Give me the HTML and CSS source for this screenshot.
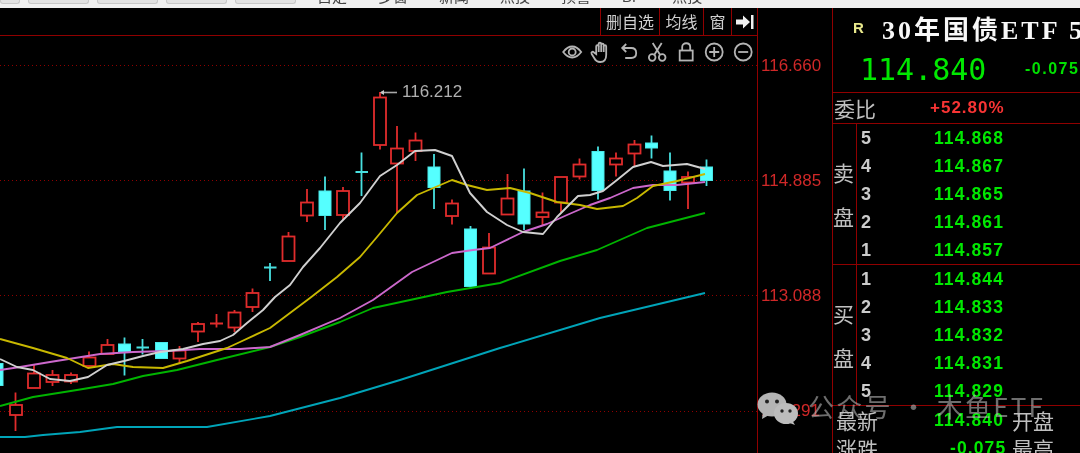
FILE: index.html
```html
<!DOCTYPE html>
<html lang="zh">
<head>
<meta charset="utf-8">
<title>30年国债ETF</title>
<link rel="stylesheet" href="styles.css">
</head>
<body>
<div class="page">
  <header class="menubar">
    <div class="tabs"><span class="tab first"></span><span class="tab"></span><span class="tab"></span><span class="tab"></span><span class="tab"></span></div>
    <nav class="menu"><span>自定</span><span>多窗</span><span>新闻</span><span>点技</span><span>预警</span><span>BF</span><span>点技</span></nav>
  </header>
  <main class="workspace">
    <section class="chart-col">
      <div class="toolbar">
        <button class="tb w1">删自选</button>
        <button class="tb w2">均线</button>
        <button class="tb w3">窗</button>
        <button class="tb w4"><svg width="20" height="16" viewBox="0 0 20 16"><path class="solid" d="M1 5.500h7V1.500L15 8l-7 6.500v-4H1z"/><rect class="solid" x="16" y="1" width="2.500" height="14"/></svg></button>
      </div>
      <div class="chart">
        <svg class="plot" width="757" height="417" viewBox="0 36 757 417">
          <g class="grid">
            <path d="M0 65.500H757M0 180.500H757M0 295.500H757M0 411.500H757"/>
          </g>
          <g class="up">
            <path d="M15.500 392.500V431"/><rect x="10" y="405" width="12" height="10"/>
            <path d="M34 365V374"/><rect x="28" y="373.500" width="12" height="14.500"/>
            <path d="M52.500 370V386"/><rect x="46.500" y="375" width="12" height="7"/>
            <path d="M71 372.500V384"/><rect x="65" y="375" width="12" height="6.500"/>
            <path d="M89 351.500V366"/><rect x="83.500" y="357.500" width="12" height="8.500"/>
            <path d="M107.500 339V354"/><rect x="101.500" y="345" width="12" height="9"/>
            <path d="M179.500 346V364"/><rect x="173.500" y="350.500" width="12" height="8"/>
            <path d="M198 322V342"/><rect x="192" y="324" width="12" height="7.500"/>
            <path d="M216.500 314V327.500M210 323.500H223"/>
            <path d="M234.500 310V332"/><rect x="228.500" y="312.500" width="12" height="15"/>
            <path d="M252.500 288.500V312"/><rect x="246.500" y="293" width="12" height="14"/>
            <path d="M288.500 232V261"/><rect x="282.500" y="236.500" width="12" height="24.500"/>
            <path d="M307 189V222"/><rect x="301" y="202.500" width="12" height="13"/>
            <path d="M343 187V220"/><rect x="337" y="191" width="12" height="24"/>
            <path d="M380 92V149.500"/><rect x="374" y="97.500" width="12" height="47.500"/>
            <path d="M397 126V213"/><rect x="391" y="148.500" width="12" height="15"/>
            <path d="M415.500 132.500V161"/><rect x="409.500" y="140.500" width="12" height="10.500"/>
            <path d="M452 199.500V224.500"/><rect x="446" y="203.500" width="12" height="12.500"/>
            <path d="M489 233V248"/><rect x="483" y="247.500" width="12" height="26"/>
            <path d="M507.500 174V199"/><rect x="501.500" y="198.500" width="12" height="16"/>
            <path d="M542.500 192.500V225"/><rect x="536.500" y="212.500" width="12" height="4.500"/>
            <path d="M561 202V212"/><rect x="555" y="177" width="12" height="25.500"/>
            <path d="M579.500 158.500V179.500"/><rect x="573.500" y="164.500" width="12" height="12"/>
            <path d="M616 152.500V176.500"/><rect x="610" y="158.500" width="12" height="6"/>
            <path d="M634.500 140V166"/><rect x="628.500" y="144.500" width="12" height="9"/>
            <path d="M688 171.500V209"/><rect x="682" y="177" width="12" height="5.500"/>
          </g>
          <g class="down">
            <rect x="-9" y="363.500" width="12" height="22"/>
            <path d="M124.500 337.500V375.500"/><rect x="118.500" y="344" width="12" height="7.500"/>
            <path d="M142.500 339V354.500M136.500 347.500H149"/>
            <rect x="155.500" y="342.500" width="12" height="16"/>
            <path d="M270 263V281M264 267.500H276.500"/>
            <path d="M325 176.500V230"/><rect x="319" y="191" width="12" height="24.500"/>
            <path d="M361.500 152.500V196M355.500 172H368"/>
            <path d="M434 154V209"/><rect x="428" y="167" width="12" height="20.500"/>
            <path d="M470.500 226V289"/><rect x="464.500" y="229" width="12" height="57.500"/>
            <path d="M524 168.500V230"/><rect x="518" y="191" width="12" height="33"/>
            <path d="M598 146.500V199.500"/><rect x="592" y="151.500" width="12" height="39"/>
            <path d="M651.500 135.500V158.500"/><rect x="645.500" y="143" width="12" height="5"/>
            <path d="M670 152.500V200.500"/><rect x="664" y="171" width="12" height="19.500"/>
            <path d="M706.500 159.500V186"/><rect x="700.500" y="167" width="12" height="13.500"/>
          </g>
          <g class="lines">
            <polyline class="teal" points="0,437 25,437 43,435 80,432 117,427 207,427 270,416 340,398 400,380 500,348 600,318 705,293"/>
            <polyline class="green" points="0,406 33,397 77,390 113,384 143,376 177,370 217,360 270,347 300,337 340,322 373,308 410,300 447,292 500,283 560,261 597,250 647,228 705,213"/>
            <polyline class="pink" points="0,370 20,367 50,362 100,354 133,352 167,351 200,349 240,349 270,347 300,335 340,318 373,300 412,272 452,253 473,250 490,248 523,232 547,224 567,215 590,205 610,198 633,188 653,185 677,185 705,182"/>
            <polyline class="yellow" points="0,339 33,348 67,358 88,368 113,364 133,367 163,368 187,361 227,348 240,342 270,328 310,298 337,277 360,257 377,237 397,213 417,195 452,180 467,185 487,190 510,188 530,193 557,202 580,205 597,209 623,206 637,198 653,186 677,181 705,174"/>
            <polyline class="white" points="0,359 17,367 33,370 50,379 70,381 88,377 107,365 124,361 143,356 160,352 183,349 203,344 220,341 233,335 247,323 263,310 275,297 290,285 303,267 320,248 340,223 360,203 380,176 397,165 415,151 435,150 452,156 470,193 487,212 507,225 523,232 543,234 557,217 578,196 590,195 603,191 617,180 633,167 651,162 663,166 687,164 705,169"/>
          </g>
          <path class="leader" d="M381 92.500H397"/>
          <path class="leader-head" d="M380 92.500l4-2.500v5z"/>
          <text class="peak" x="402" y="97">116.212</text>
        </svg>
        <div class="tools">
          <svg class="ico" height="20" viewBox="0 0 22 20"><path d="M2 10c3-4 6-5.500 9-5.500s6 1.500 9 5.500c-3 4-6 5.500-9 5.500s-6-1.500-9-5.500z"/><circle cx="11" cy="10" r="3.500"/></svg>
          <svg class="ico" height="22" viewBox="0 0 20 22"><path d="M5 13V5.500c0-1.800 2.500-1.800 2.500 0V3c0-1.800 2.500-1.800 2.500 0v1c0-1.800 2.500-1.800 2.500 0v1.500c0-1.800 2.500-1.800 2.500 0V14c0 4-2 7-6 7-3 0-4.500-1-6-4l-2.500-4c-1-1.800 1-3 2.300-1.500z"/><path d="M7.500 5v6M10 4v7M12.500 5v6"/></svg>
          <svg class="ico" height="20" viewBox="0 0 18 20"><path d="M6 2L2 6l4 4M2 6h9c3 0 5 2 5 5s-2 5-5 5H5"/></svg>
          <svg class="ico" height="20" viewBox="0 0 20 20"><circle cx="5" cy="15.500" r="3.300"/><circle cx="15" cy="15.500" r="3.300"/><path d="M7 13L14.500 1M13 13L5.500 1"/></svg>
          <svg class="ico" height="20" viewBox="0 0 18 20"><rect x="2.500" y="8.500" width="13" height="10"/><path d="M5 8.500V5c0-5 8-5 8 0v3.500"/></svg>
          <svg class="ico" height="20" viewBox="0 0 20 20"><circle cx="10" cy="10" r="8.500"/><path d="M5 10h10M10 5v10"/></svg>
          <svg class="ico" height="20" viewBox="0 0 20 20"><circle cx="10" cy="10" r="8.500"/><path d="M5 10h10"/></svg>
        </div>
      </div>
    </section>
    <section class="axis">
      <div class="tick">116.660</div>
      <div class="tick">114.885</div>
      <div class="tick">113.088</div>
      <div class="tick">111.291</div>
    </section>
    <aside class="quote">
      <div class="head">
        <div class="title-row"><span class="flag">R</span><span class="name">30年国债ETF 5</span></div>
        <div class="price-row"><span class="last">114.840</span><span class="chg">-0.075</span></div>
      </div>
      <div class="ratio"><span class="cap">委比</span><span class="pct">+52.80%</span></div>
      <div class="book">
        <div class="side"><span>卖</span><span>盘</span></div>
        <div class="levels">
          <div class="lv"><b>5</b><i>114.868</i></div>
          <div class="lv"><b>4</b><i>114.867</i></div>
          <div class="lv"><b>3</b><i>114.865</i></div>
          <div class="lv"><b>2</b><i>114.861</i></div>
          <div class="lv"><b>1</b><i>114.857</i></div>
        </div>
      </div>
      <div class="book">
        <div class="side"><span>买</span><span>盘</span></div>
        <div class="levels">
          <div class="lv"><b>1</b><i>114.844</i></div>
          <div class="lv"><b>2</b><i>114.833</i></div>
          <div class="lv"><b>3</b><i>114.832</i></div>
          <div class="lv"><b>4</b><i>114.831</i></div>
          <div class="lv"><b>5</b><i>114.829</i></div>
        </div>
      </div>
      <div class="stats">
        <div class="st"><span class="cap">最新</span><i>114.840</i><span class="cap">开盘</span></div>
        <div class="st"><span class="cap">涨跌</span><i class="narrow">-0.075</i><span class="cap">最高</span></div>
      </div>
    </aside>
  </main>
  <div class="watermark">
    <svg width="46" height="34" viewBox="0 0 46 34"><ellipse class="wb" cx="15" cy="12.500" rx="14.500" ry="12"/><path class="wb" d="M6 20l-1 7 7-4z"/><circle class="we" cx="10" cy="9.500" r="2"/><circle class="we" cx="20" cy="9.500" r="2"/><ellipse class="wb2" cx="29" cy="21.500" rx="12" ry="10.500"/><path class="wb2" d="M35 28l3 5-8-3z"/><circle class="we" cx="25" cy="19" r="1.700"/><circle class="we" cx="33" cy="19" r="1.700"/></svg>
    <span>公众号 · 木鱼ETF</span>
  </div>
</div>
</body>
</html>
```
FILE: styles.css
```css
* { box-sizing: border-box; }
html, body { margin: 0; height: 100%; background: #000; }
.page {
  position: relative;
  width: 1080px;
  height: 453px;
  overflow: hidden;
  background: #000;
  font-family: "Liberation Sans", "Noto Sans CJK SC", sans-serif;
  filter: blur(0.35px);
}
.menubar {
  height: 8px;
  background: #f0f0f0;
  display: flex;
  overflow: hidden;
}
.tabs { display: flex; gap: 8px; width: 317px; flex: none; }
.tab {
  width: 61px;
  height: 4px;
  background: #e2e2e2;
  border: 1px solid #c8c8c8;
  border-top: 0;
  border-radius: 0 0 3px 3px;
}
.tab.first { width: 20px; }
.menu {
  display: flex;
  gap: 31px;
  font-size: 15px;
  line-height: 16px;
  margin-top: -11px;
  color: #444;
}
.workspace { display: flex; height: 445px; }
.chart-col { width: 757px; flex: none; display: flex; flex-direction: column; }
.toolbar {
  height: 28px;
  display: flex;
  justify-content: flex-end;
  border-bottom: 1.5px solid #900000;
}
.tb {
  padding: 0;
  height: 27px;
  background: #000;
  border: 0;
  border-left: 1.5px solid #900000;
  color: #d0d0d0;
  font: 16px/27px "Noto Sans CJK SC", sans-serif;
  display: flex;
  align-items: center;
  justify-content: center;
}
.w1 { width: 59px; }
.w2 { width: 44px; }
.w3 { width: 28px; }
.w4 { width: 26px; }
.solid { fill: #f0f0f0; }
.chart { position: relative; height: 417px; }
.plot { display: block; }
.grid path { stroke: #900000; stroke-width: 1; stroke-dasharray: 1 3; fill: none; }
.up path, .up rect { stroke: #e02c2c; stroke-width: 1.800; }
.up rect { fill: #000; }
.down path { stroke: #48e0e0; stroke-width: 1.800; }
.down rect { fill: #55ffff; stroke: #48e8e8; stroke-width: 1; }
.lines polyline { fill: none; stroke-width: 1.900; stroke-linejoin: round; }
.white { stroke: #d0d0d0; }
.yellow { stroke: #c8b800; }
.pink { stroke: #cc68cc; }
.green { stroke: #00b400; }
.teal { stroke: #00a4b8; }
.leader { stroke: #a8a8a8; stroke-width: 1.600; }
.leader-head { fill: #c8c8c8; }
.peak { fill: #b0b0b0; font: 17px "Liberation Sans", sans-serif; }
.tools {
  position: absolute;
  top: 5px;
  right: 0;
  display: flex;
  align-items: center;
}
.ico { width: 28.400px; fill: none; stroke: #b4b4b4; stroke-width: 1.800; display: block; }
.axis {
  width: 75px;
  flex: none;
  border-left: 1.5px solid #900000;
  padding-left: 3px;
}
.tick {
  height: 115px;
  line-height: 115px;
  font-size: 17px;
  color: #d02828;
}
.quote {
  width: 248px;
  flex: none;
  border-left: 1.5px solid #900000;
  display: flex;
  flex-direction: column;
  overflow: hidden;
}
.head { height: 85px; border-bottom: 1.5px solid #900000; flex: none; }
.title-row { height: 38px; display: flex; align-items: center; white-space: nowrap; padding-left: 20px; }
.flag { color: #e8e88c; font-size: 15px; font-weight: bold; width: 29px; flex: none; }
.name {
  color: #f8f8f8;
  font: bold 26px "Liberation Serif", "Noto Sans CJK SC", serif;
  letter-spacing: 3px;
}
.price-row { height: 46px; display: flex; align-items: center; white-space: nowrap; padding-left: 27px; }
.last { color: #00e800; font: 30px "DejaVu Sans Mono", monospace; width: 165px; flex: none; }
.chg { color: #00e000; font-weight: bold; font-size: 16px; letter-spacing: 1.500px; }
.ratio {
  height: 31px;
  border-bottom: 1.5px solid #900000;
  display: flex;
  align-items: center;
  flex: none;
  padding-left: 1px;
}
.cap { color: #c0c0c0; font: 21px/1 "Noto Sans CJK SC", sans-serif; width: 44px; flex: none; }
.pct { color: #f83434; font-weight: bold; font-size: 17px; margin-left: 52px; letter-spacing: 1px; }
.book { height: 141px; border-bottom: 1.5px solid #900000; display: flex; flex: none; }
.side {
  width: 24px;
  flex: none;
  border-right: 1.5px solid #900000;
  color: #c0c0c0;
  font: 21px/1 "Noto Sans CJK SC", sans-serif;
  display: flex;
  flex-direction: column;
  align-items: center;
  justify-content: center;
  gap: 23px;
  padding-right: 2px;
}
.levels { flex: 1; }
.lv { height: 28px; display: flex; align-items: center; }
.lv b { width: 77px; padding-left: 4px; flex: none; color: #cccccc; font-size: 18px; }
.lv i, .st i { font-style: normal; font-weight: bold; font-size: 17.500px; letter-spacing: 1.100px; color: #00e800; }
.st { height: 28px; display: flex; align-items: center; padding-left: 3px; }
.st .cap { width: 42px; }
.st i { width: 134px; padding-left: 56px; flex: none; margin-right: 0; }
.st i.narrow { padding-left: 72px; }
.watermark {
  position: absolute;
  left: 757px;
  top: 392px;
  display: flex;
  align-items: center;
  gap: 7px;
  color: rgba(190, 190, 190, .58);
  font: 26px/34px "Noto Sans CJK SC", sans-serif;
  letter-spacing: 2.200px;
  white-space: nowrap;
}
.watermark span { margin-top: -6px; margin-left: -2px; }
.wb { fill: #b4b4b4; }
.wb2 { fill: #bcbcbc; stroke: #000; stroke-width: 0; }
.we { fill: #222; }
```
